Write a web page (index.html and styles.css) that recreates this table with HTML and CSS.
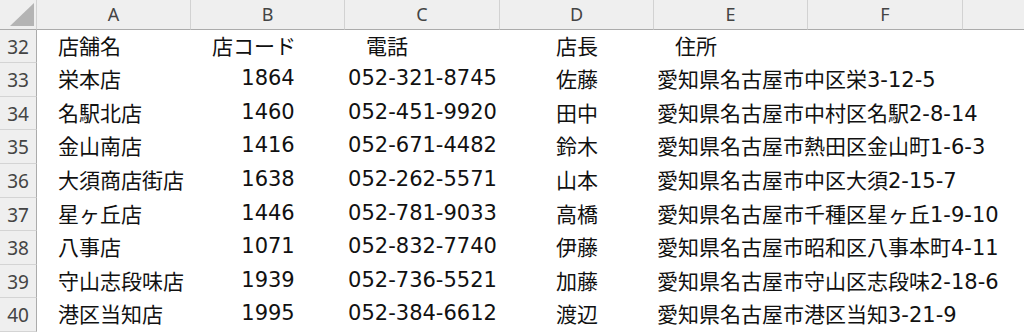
FILE: index.html
```html
<!DOCTYPE html>
<html lang="ja">
<head>
<meta charset="utf-8">
<link rel="stylesheet" href="styles.css">
</head>
<body>
<div class="sheet">
  <div class="corner"><svg width="36" height="30" viewBox="0 0 36 30"><polygon points="34,3 34,26 10,26" fill="#b4b4b4"/></svg></div>
  <div class="colhead">A</div>
  <div class="colhead">B</div>
  <div class="colhead">C</div>
  <div class="colhead">D</div>
  <div class="colhead">E</div>
  <div class="colhead">F</div>
  <div class="colhead last"></div>

  <div class="rowhead">32</div>
  <div class="cell indent">店舗名</div>
  <div class="cell indent">店コード</div>
  <div class="cell indent">電話</div>
  <div class="cell center">店長</div>
  <div class="cell indent">住所</div>
  <div class="cell"></div>
  <div class="cell"></div>

  <div class="rowhead">33</div>
  <div class="cell indent">栄本店</div>
  <div class="cell center">1864</div>
  <div class="cell center">052-321-8745</div>
  <div class="cell center">佐藤</div>
  <div class="cell addr">愛知県名古屋市中区栄3-12-5</div>
  <div class="cell"></div>
  <div class="cell"></div>

  <div class="rowhead">34</div>
  <div class="cell indent">名駅北店</div>
  <div class="cell center">1460</div>
  <div class="cell center">052-451-9920</div>
  <div class="cell center">田中</div>
  <div class="cell addr">愛知県名古屋市中村区名駅2-8-14</div>
  <div class="cell"></div>
  <div class="cell"></div>

  <div class="rowhead">35</div>
  <div class="cell indent">金山南店</div>
  <div class="cell center">1416</div>
  <div class="cell center">052-671-4482</div>
  <div class="cell center">鈴木</div>
  <div class="cell addr">愛知県名古屋市熱田区金山町1-6-3</div>
  <div class="cell"></div>
  <div class="cell"></div>

  <div class="rowhead">36</div>
  <div class="cell indent">大須商店街店</div>
  <div class="cell center">1638</div>
  <div class="cell center">052-262-5571</div>
  <div class="cell center">山本</div>
  <div class="cell addr">愛知県名古屋市中区大須2-15-7</div>
  <div class="cell"></div>
  <div class="cell"></div>

  <div class="rowhead">37</div>
  <div class="cell indent">星ヶ丘店</div>
  <div class="cell center">1446</div>
  <div class="cell center">052-781-9033</div>
  <div class="cell center">高橋</div>
  <div class="cell addr">愛知県名古屋市千種区星ヶ丘1-9-10</div>
  <div class="cell"></div>
  <div class="cell"></div>

  <div class="rowhead">38</div>
  <div class="cell indent">八事店</div>
  <div class="cell center">1071</div>
  <div class="cell center">052-832-7740</div>
  <div class="cell center">伊藤</div>
  <div class="cell addr">愛知県名古屋市昭和区八事本町4-11</div>
  <div class="cell"></div>
  <div class="cell"></div>

  <div class="rowhead">39</div>
  <div class="cell indent">守山志段味店</div>
  <div class="cell center">1939</div>
  <div class="cell center">052-736-5521</div>
  <div class="cell center">加藤</div>
  <div class="cell addr">愛知県名古屋市守山区志段味2-18-6</div>
  <div class="cell"></div>
  <div class="cell"></div>

  <div class="rowhead">40</div>
  <div class="cell indent">港区当知店</div>
  <div class="cell center">1995</div>
  <div class="cell center">052-384-6612</div>
  <div class="cell center">渡辺</div>
  <div class="cell addr">愛知県名古屋市港区当知3-21-9</div>
  <div class="cell"></div>
  <div class="cell"></div>
</div>
</body>
</html>
```

FILE: styles.css
```css
html, body {
  margin: 0;
  padding: 0;
  background: #ffffff;
}

.sheet {
  width: 1024px;
  height: 332px;
  overflow: hidden;
  display: grid;
  grid-template-columns: 37px 154px 154px 155px 154px 154px 155px 61px;
  grid-template-rows: 30px 33px 34px 33px 34px 34px 33px 34px 33px 34px;
}

.corner {
  background: #efefef;
  border-right: 1px solid #d2d2d2;
  border-bottom: 1px solid #ababab;
  box-sizing: border-box;
  overflow: hidden;
}

.corner svg {
  display: block;
}

.colhead {
  background: #efefef;
  border-right: 1px solid #d2d2d2;
  border-bottom: 1px solid #ababab;
  box-sizing: border-box;
  display: flex;
  align-items: center;
  justify-content: center;
  font-family: "Noto Sans", "Liberation Sans", sans-serif;
  font-size: 18px;
  color: #444444;
  padding-bottom: 1px;
}

.colhead.last {
  border-right: none;
}

.rowhead {
  background: #efefef;
  border-right: 1px solid #ababab;
  border-bottom: 1px solid #d4d4d4;
  box-sizing: border-box;
  display: flex;
  align-items: center;
  justify-content: center;
  font-family: "Noto Sans", "Liberation Sans", sans-serif;
  font-size: 19px;
  color: #444444;
  padding-top: 1px;
}

.cell {
  display: flex;
  align-items: center;
  font-family: "DejaVu Sans", "Noto Sans CJK JP", sans-serif;
  font-size: 21px;
  color: #111111;
  white-space: nowrap;
  padding-bottom: 4px;
  box-sizing: border-box;
  overflow: visible;
}

.cell.indent {
  padding-left: 21px;
}

.cell.center {
  justify-content: center;
}

.cell.addr {
  padding-left: 3px;
}
```
